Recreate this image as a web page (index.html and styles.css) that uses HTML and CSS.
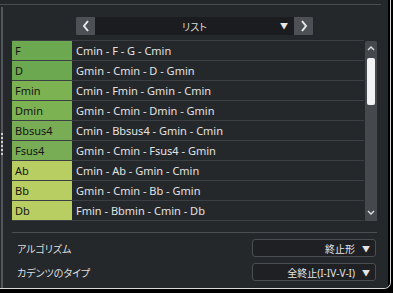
FILE: index.html
```html
<!DOCTYPE html>
<html lang="ja">
<head>
    <meta charset="UTF-8">
    <title>コード進行</title>
    <link rel="stylesheet" href="styles.css">
</head>
<body>

<div class="frame">
    <div class="window">
        <div class="topline"></div>
        <div class="content">
            <span class="grip"></span>

            <div class="nav">
                <button type="button" class="nav-btn">
                    <svg width="8" height="12" viewBox="0 0 8 12"><path d="M6 1 L2 6 L6 11" fill="none" stroke="#e8e8e8" stroke-width="2"/></svg>
                </button>
                <div class="nav-select">
                    <span>リスト</span>
                    <span class="tri">&#9660;</span>
                </div>
                <button type="button" class="nav-btn">
                    <svg width="8" height="12" viewBox="0 0 8 12"><path d="M2 1 L6 6 L2 11" fill="none" stroke="#e8e8e8" stroke-width="2"/></svg>
                </button>
            </div>

            <div class="list">
                <div class="rows">
                    <div class="row"><div class="chord c1">F</div><div class="prog">Cmin - F - G - Cmin</div></div>
                    <div class="row"><div class="chord c1">D</div><div class="prog">Gmin - Cmin - D - Gmin</div></div>
                    <div class="row"><div class="chord c2">Fmin</div><div class="prog">Cmin - Fmin - Gmin - Cmin</div></div>
                    <div class="row"><div class="chord c2">Dmin</div><div class="prog">Gmin - Cmin - Dmin - Gmin</div></div>
                    <div class="row"><div class="chord c3">Bbsus4</div><div class="prog">Cmin - Bbsus4 - Gmin - Cmin</div></div>
                    <div class="row"><div class="chord c3">Fsus4</div><div class="prog">Gmin - Cmin - Fsus4 - Gmin</div></div>
                    <div class="row"><div class="chord c4">Ab</div><div class="prog">Cmin - Ab - Gmin - Cmin</div></div>
                    <div class="row"><div class="chord c4">Bb</div><div class="prog">Gmin - Cmin - Bb - Gmin</div></div>
                    <div class="row"><div class="chord c4">Db</div><div class="prog">Fmin - Bbmin - Cmin - Db</div></div>
                    <div class="row"><div class="chord c5"></div><div class="prog"></div></div>
                </div>
                <div class="scrollbar">
                    <svg width="8" height="6" viewBox="0 0 8 6"><path d="M1 5 L4 2 L7 5" fill="none" stroke="#e0e0e0" stroke-width="1.4"/></svg>
                    <div class="track"><div class="thumb"></div></div>
                    <svg width="8" height="6" viewBox="0 0 8 6"><path d="M1 1 L4 4 L7 1" fill="none" stroke="#e0e0e0" stroke-width="1.4"/></svg>
                </div>
            </div>

            <div class="options">
                <div class="option">
                    <span class="label">アルゴリズム</span>
                    <div class="dropdown"><span>終止形</span><span class="tri">&#9660;</span></div>
                </div>
                <div class="option">
                    <span class="label">カデンツのタイプ</span>
                    <div class="dropdown"><span>全終止(I-IV-V-I)</span><span class="tri">&#9660;</span></div>
                </div>
            </div>
        </div>
    </div>
</div>

</body>
</html>
```

FILE: styles.css
```css
body {
    margin: 0;
    background-color: #000;
    font-family: "Noto Sans", "Noto Sans CJK JP", sans-serif;
    font-size: 11px;
    color: #e2e2e2;
}

.frame {
    width: 390px;
    height: 288px;
    border-right: 1px solid #d8d8d8;
    border-bottom: 1px solid #d8d8d8;
    border-bottom-right-radius: 7px;
    overflow: hidden;
}

.window {
    height: 288px;
    background-color: #25282b;
    border-right: 2px solid #000;
    box-sizing: border-box;
    width: 390px;
    padding-top: 4px;
}

.topline {
    width: 381px;
    height: 1px;
    background-color: #4a4e52;
}

.content {
    position: relative;
    margin: 2px 0 0 1px;
    height: 275px;
    border-left: 2px solid #53575b;
    padding: 10px 11px 0 9px;
}

.grip {
    position: absolute;
    left: -2px;
    top: 126px;
    width: 2px;
    height: 22px;
    background: repeating-linear-gradient(#d0d0d0 0 2px, transparent 2px 4px);
}

.nav {
    display: flex;
    width: 237px;
    height: 18px;
    margin: 0 auto 5px;
    border-radius: 2px;
    overflow: hidden;
    background-color: #4b4f53;
}

.nav-btn {
    width: 19px;
    height: 18px;
    padding: 0;
    border: none;
    background-color: #4d5155;
    display: flex;
    align-items: center;
    justify-content: center;
}

.nav-select {
    flex: 1;
    position: relative;
    background-color: #1b1c1f;
    display: flex;
    align-items: center;
    justify-content: center;
    color: #dcdcdc;
    font-size: 10px;
    font-feature-settings: "palt";
}

.nav-select .tri {
    position: absolute;
    right: 6px;
    top: 3px;
    font-size: 8px;
    color: #e8e8e8;
}

.list {
    display: flex;
    height: 181px;
    overflow: hidden;
}

.rows {
    flex: 1;
    border-top: 1px solid #3b3f43;
}

.row {
    display: flex;
    height: 19px;
    border-bottom: 1px solid #3b3f43;
    line-height: 19px;
}

.chord {
    width: 57px;
    padding-left: 3px;
    color: #151515;
}

.c1 { background-color: #6ca84f; }
.c2 { background-color: #7db252; }
.c3 { background-color: #79ad55; }
.c4 { background-color: #b8ce62; }
.c5 { background-color: #d4dc6a; }

.prog {
    flex: 1;
    padding-left: 4px;
    white-space: nowrap;
}

.scrollbar {
    width: 12px;
    margin: 1px 0 0 1px;
    height: 180px;
    background-color: #45494d;
    border-radius: 2px 2px 0 0;
    display: flex;
    flex-direction: column;
    align-items: center;
    padding: 4px 0 5px;
    box-sizing: border-box;
}

.track {
    flex: 1;
    width: 8px;
    padding-top: 7px;
}

.thumb {
    height: 47px;
    background-color: #f2f2f2;
    border-radius: 2px;
}

.options {
    margin-top: 11px;
    border-top: 1px solid #4a4e52;
    padding-top: 6px;
}

.option {
    display: flex;
    align-items: center;
    justify-content: space-between;
    margin-bottom: 6px;
    padding-right: 1px;
    font-size: 10px;
    font-feature-settings: "palt";
}

.label {
    padding-left: 5px;
    color: #dedede;
}

.dropdown {
    width: 124px;
    height: 18px;
    border: 1px solid #4a4d51;
    border-radius: 3px;
    background-color: #1e2023;
    display: flex;
    align-items: center;
    justify-content: flex-end;
    gap: 7px;
    padding-right: 5px;
    box-sizing: border-box;
    color: #e4e4e4;
}

.dropdown .tri {
    font-size: 8px;
}
```
